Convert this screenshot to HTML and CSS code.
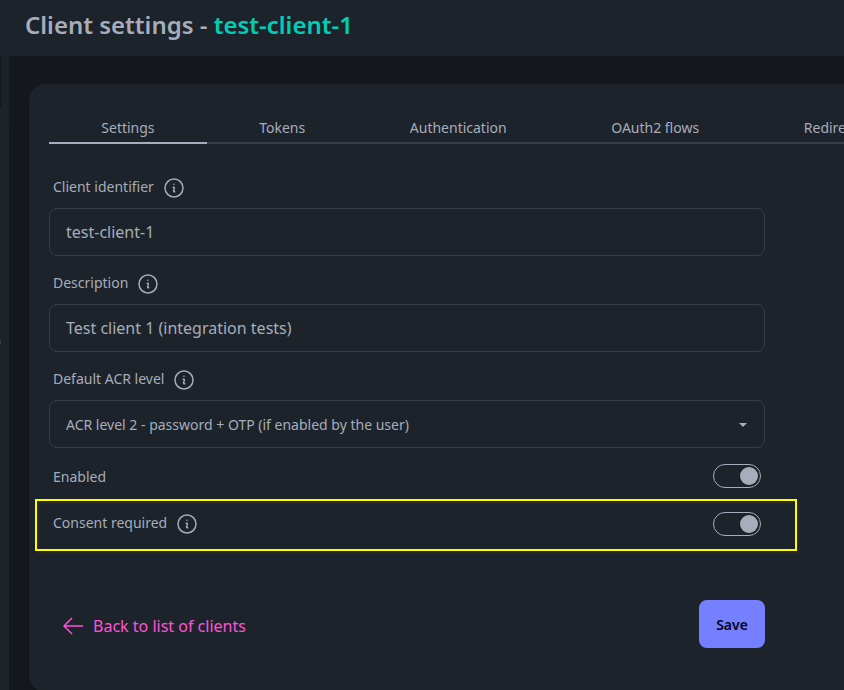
FILE: index.html
```html
<!DOCTYPE html>
<html lang="en">
<head>
<meta charset="utf-8">
<title>Client settings</title>
<link rel="stylesheet" href="styles.css">
</head>
<body>
<svg class="defs" aria-hidden="true">
  <symbol id="info" viewBox="0 0 24 24"><path d="M11.25 11.25l.041-.02a.75.75 0 011.063.852l-.708 2.836a.75.75 0 001.063.853l.041-.021M21 12a9 9 0 11-18 0 9 9 0 0118 0zm-9-3.75h.008v.008H12V8.25z" fill="none" stroke="currentColor" stroke-width="1.5" stroke-linecap="round" stroke-linejoin="round"/></symbol>
</svg>
<header class="header"><h1>Client settings - <span>test-client-1</span></h1></header>
<div class="body">
  <aside class="sidebar"></aside>
  <main class="main">
    <section class="card">
      <nav class="tabs">
        <a class="tab active">Settings</a><a class="tab">Tokens</a><a class="tab">Authentication</a><a class="tab">OAuth2 flows</a><a class="tab">Redirect URIs</a>
      </nav>
      <form class="form">
        <div class="field">
          <label class="label">Client identifier <svg class="info"><use href="#info"/></svg></label>
          <div class="input">test-client-1</div>
        </div>
        <div class="field">
          <label class="label">Description <svg class="info"><use href="#info"/></svg></label>
          <div class="input">Test client 1 (integration tests)</div>
        </div>
        <div class="field">
          <label class="label">Default ACR level <svg class="info"><use href="#info"/></svg></label>
          <div class="input select">ACR level 2 - password + OTP (if enabled by the user) <svg class="caret" viewBox="0 0 8 4"><path d="M0 0h8L4 4z" fill="currentColor"/></svg></div>
        </div>
        <div class="switch-row"><span>Enabled</span><i class="toggle"></i></div>
        <div class="highlight">
          <label class="label">Consent required <svg class="info"><use href="#info"/></svg></label>
          <i class="toggle"></i>
        </div>
        <div class="actions">
          <a class="back"><svg class="arrow" viewBox="0 0 20 18"><path d="M9 1L1 9l8 8M1 9h19" fill="none" stroke="currentColor" stroke-width="1.5"/></svg>Back to list of clients</a>
          <button class="save" type="button">Save</button>
        </div>
      </form>
    </section>
  </main>
</div>
</body>
</html>
```
FILE: styles.css
```css
* { box-sizing: border-box; }
body {
  margin: 0;
  height: 690px;
  overflow: hidden;
  display: flex;
  flex-direction: column;
  background: #15191e;
  color: #a6adbb;
  font-family: "Noto Sans", sans-serif;
  font-size: 14px;
  line-height: 20px;
}
.defs { position: absolute; width: 0; height: 0; }
.header {
  flex: none;
  height: 56px;
  padding: 9px 25px;
  background: #1d232a;
}
h1 { margin: 0; font-size: 24px; line-height: 32px; font-weight: 600; }
h1 span { color: #00cdb7; }
.body { flex: 1; display: flex; min-height: 0; }
.sidebar {
  flex: none;
  width: 9px;
  background: linear-gradient(#15191e, #15191e) 0 0 / 1px 52px no-repeat,
    linear-gradient(#343b43, #343b43) 0 284px / 1px 4px no-repeat, #1d232a;
}
.main { flex: 1; min-width: 0; padding: 28px 0 0 20px; overflow: hidden; }
.card {
  width: 1000px;
  height: 608px;
  padding: 28px 20px;
  border-radius: 16px;
  background: #1d232a;
  box-shadow: 0 20px 25px -5px rgba(0, 0, 0, .1), 0 8px 10px -6px rgba(0, 0, 0, .1);
}
.tabs { display: flex; }
.tab {
  height: 32px;
  padding: 6px 52.3px 0;
  border-bottom: 2px solid #373d46;
  white-space: nowrap;
}
.active { border-color: #a6adbb; }
.form { width: 716px; padding-top: 24px; }
.label { display: flex; align-items: center; height: 40px; padding: 0 4px 2px; }
.info { width: 24px; height: 24px; margin: 2px 0 0 8px; }
.input {
  display: flex;
  align-items: center;
  height: 48px;
  padding: 0 16px;
  border: 1px solid #373d46;
  border-radius: 8px;
  font-size: 16px;
}
.select { justify-content: space-between; padding: 2px 17px 0 16px; font-size: 14px; }
.caret { width: 8px; height: 4px; }
.field { height: 96px; }
.switch-row {
  display: flex;
  align-items: center;
  justify-content: space-between;
  height: 40px;
  padding: 0 4px;
}
.switch-row span { padding-top: 2px; }
.toggle {
  display: flex;
  justify-content: flex-end;
  align-items: center;
  width: 48px;
  height: 24px;
  padding-right: 2px;
  border: 1px solid #a6adbb;
  border-radius: 12px;
}
.toggle::before { content: ""; width: 18px; height: 18px; border-radius: 50%; background: #a6adbb; }
.highlight {
  display: flex;
  align-items: flex-start;
  justify-content: space-between;
  height: 52px;
  margin: 3px -32px 0 -14px;
  padding: 3px 34px 0 12px;
  border: 2px solid #ff0;
  box-shadow: 2px 2px 3px #282b30, inset 2px 2px 3px #282b30;
}
.highlight .toggle { margin-top: 8px; }
.actions { display: flex; justify-content: space-between; align-items: center; margin-top: 49px; }
.back {
  display: flex;
  align-items: center;
  gap: 10px;
  padding: 4px 0 0 14px;
  color: #ff52d9;
  font-size: 16px;
}
.arrow { width: 20px; height: 18px; }
.save {
  width: 66px;
  height: 48px;
  padding: 0;
  border: 0;
  border-radius: 8px;
  background: #7480ff;
  color: #050617;
  font: 600 14px "Noto Sans", sans-serif;
}
```
